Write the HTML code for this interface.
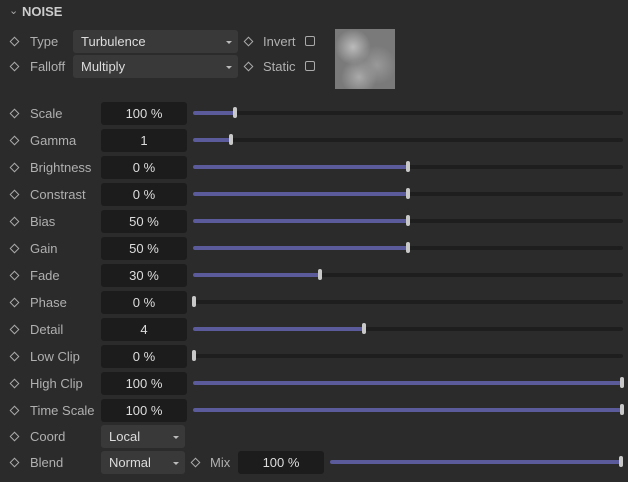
<html><head><style>
body{margin:0;width:628px;height:482px;background:#2b2b2b;font-family:"Liberation Sans",sans-serif;font-size:13px;color:#b0b0b0;position:relative;overflow:hidden}
.a{position:absolute}
.d{position:absolute;width:5px;height:5px;border:1.2px solid #aaa;transform:rotate(45deg)}
.f{position:absolute;background:#1c1c1c;border-radius:3px;height:23px;line-height:23px;text-align:center;color:#ddd}
.dd{position:absolute;background:#393939;border-radius:3px;height:23px;line-height:23px;color:#ddd;padding-left:8px;box-sizing:border-box}
.dd:after{content:"";position:absolute;right:6px;top:11px;border:3.5px solid transparent;border-top:3.5px solid #bbb}
.t{position:absolute;height:4px;background:#1e1e1e;border-radius:2px}
.fill{position:absolute;left:0;top:0;height:4px;background:#5b5b9c;border-radius:2px}
.h{position:absolute;width:4px;height:11px;background:#c8c8c8;border-radius:2px;top:-4px}
.cb{position:absolute;width:8px;height:8px;border:1.2px solid #aaa;border-radius:2px}
</style></head><body>
<div class="a" style="left:9px;top:4px;color:#aaa;font-size:11px">&#x2304;</div>
<div class="a" style="left:22px;top:4px;font-weight:bold;color:#ccc;font-size:13px">NOISE</div>
<div class="d" style="left:11px;top:38px"></div><div class="a" style="left:30px;top:34px">Type</div>
<div class="dd" style="left:73px;top:30px;width:165px">Turbulence</div>
<div class="d" style="left:11px;top:63px"></div><div class="a" style="left:30px;top:59px">Falloff</div>
<div class="dd" style="left:73px;top:55px;width:165px">Multiply</div>
<div class="d" style="left:245px;top:38px"></div><div class="a" style="left:263px;top:34px">Invert</div><div class="cb" style="left:305px;top:36px"></div>
<div class="d" style="left:245px;top:63px"></div><div class="a" style="left:263px;top:59px">Static</div><div class="cb" style="left:305px;top:61px"></div>
<div class="a" style="left:335px;top:29px;width:60px;height:60px;background:radial-gradient(circle at 30% 30%,#bbb,transparent 30%),radial-gradient(circle at 70% 60%,#999,transparent 35%),radial-gradient(circle at 40% 80%,#aaa,transparent 30%),#7a7a7a"></div>
<div id="rows"></div>
<script>
var r=[["Scale","100 %",235],["Gamma","1",231],["Brightness","0 %",408],["Constrast","0 %",408],["Bias","50 %",408],["Gain","50 %",408],["Fade","30 %",320],["Phase","0 %",194],["Detail","4",364],["Low Clip","0 %",194],["High Clip","100 %",622],["Time Scale","100 %",622]];
var h="";r.forEach(function(e,i){var y=113+27*i;
h+='<div class="d" style="left:11px;top:'+(y-3)+'px"></div><div class="a" style="left:30px;top:'+(y-7)+'px">'+e[0]+'</div>';
h+='<div class="f" style="left:101px;top:'+(y-11)+'px;width:86px">'+e[1]+'</div>';
h+='<div class="t" style="left:193px;top:'+(y-2)+'px;width:430px"><div class="fill" style="width:'+(e[2]-193)+'px"></div><div class="h" style="left:'+(e[2]-195)+'px"></div></div>';});
document.getElementById("rows").innerHTML=h;
</script>
<div class="d" style="left:11px;top:433px"></div><div class="a" style="left:30px;top:429px">Coord</div>
<div class="dd" style="left:101px;top:425px;width:84px">Local</div>
<div class="d" style="left:11px;top:459px"></div><div class="a" style="left:30px;top:455px">Blend</div>
<div class="dd" style="left:101px;top:451px;width:84px">Normal</div>
<div class="d" style="left:192px;top:459px"></div><div class="a" style="left:210px;top:455px">Mix</div>
<div class="f" style="left:238px;top:451px;width:86px">100 %</div>
<div class="t" style="left:330px;top:460px;width:293px"><div class="fill" style="width:292px"></div><div class="h" style="left:289px"></div></div>
</body></html>
